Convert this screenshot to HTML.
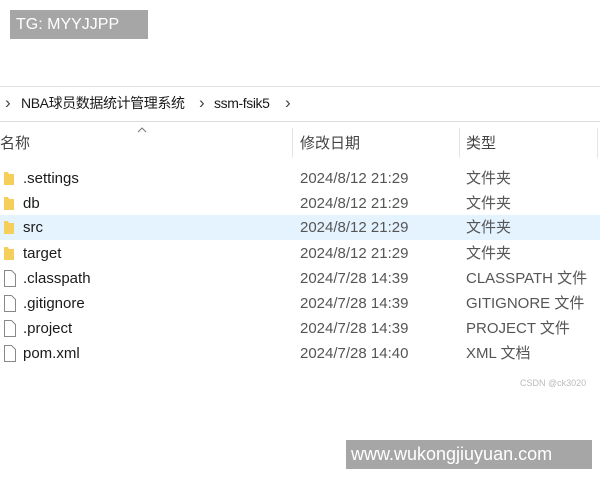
<!DOCTYPE html>
<html><head><meta charset="utf-8"><style>
body{margin:0;width:600px;height:480px;background:#fff;position:relative;overflow:hidden;font-family:"Liberation Sans","Noto Sans CJK SC",sans-serif;color:#1a1a1a}
.a{position:absolute;white-space:nowrap}
.tg{left:10px;top:10px;width:138px;height:29px;background:#a6a6a6;color:#fff;font-size:16px;line-height:29px;padding-left:6px;box-sizing:border-box}
.wm{left:346px;top:440px;width:246px;height:29px;background:#a6a6a6;color:#fff;font-size:18px;line-height:29px;padding-left:5px;box-sizing:border-box}
.hl{left:0;width:600px;height:1px;background:#e3e3e3}
.row{left:0;width:600px;height:25px;font-size:15px;line-height:25px}
.row span{position:absolute}
.n{left:23px}.d{left:300px;color:#555}.t{left:466px;color:#555}
.ic{position:absolute;left:3px;top:5px}
.bc{top:93px;font-size:14px;line-height:20px;letter-spacing:-0.4px}
.ch{color:#444;font-size:17px}
</style></head><body>
<div class="a tg">TG: MYYJJPP</div>
<div class="a hl" style="top:86px"></div>
<div class="a bc ch" style="left:5px">›</div>
<div class="a bc" style="left:21px">NBA球员数据统计管理系统</div>
<div class="a bc ch" style="left:199px">›</div>
<div class="a bc" style="left:214px">ssm-fsik5</div>
<div class="a bc ch" style="left:285px">›</div>
<div class="a hl" style="top:121px;background:#dcdcdc"></div>
<svg class="a" style="left:137px;top:127px" width="10" height="6"><path d="M1 5l4-4 4 4" fill="none" stroke="#777"/></svg>
<div class="a" style="left:0;top:134px;font-size:15px;line-height:20px;color:#444">名称</div>
<div class="a" style="left:292px;top:128px;width:1px;height:30px;background:#e5e5e5"></div>
<div class="a" style="left:300px;top:134px;font-size:15px;line-height:20px;color:#444">修改日期</div>
<div class="a" style="left:459px;top:128px;width:1px;height:30px;background:#e5e5e5"></div>
<div class="a" style="left:466px;top:134px;font-size:15px;line-height:20px;color:#444">类型</div>
<div class="a" style="left:597px;top:128px;width:1px;height:30px;background:#e5e5e5"></div>

<div class="a row" style="top:166px"><svg class="ic" width="14" height="15"><path d="M1 1h4l1 2h5v11H1z" fill="#f6cf5a"/></svg><span class="n">.settings</span><span class="d">2024/8/12 21:29</span><span class="t">文件夹</span></div>
<div class="a row" style="top:191px"><svg class="ic" width="14" height="15"><path d="M1 1h4l1 2h5v11H1z" fill="#f6cf5a"/></svg><span class="n">db</span><span class="d">2024/8/12 21:29</span><span class="t">文件夹</span></div>
<div class="a row" style="top:215px;background:#e5f3ff"><svg class="ic" width="14" height="15"><path d="M1 1h4l1 2h5v11H1z" fill="#f6cf5a"/></svg><span class="n">src</span><span class="d">2024/8/12 21:29</span><span class="t">文件夹</span></div>
<div class="a row" style="top:241px"><svg class="ic" width="14" height="15"><path d="M1 1h4l1 2h5v11H1z" fill="#f6cf5a"/></svg><span class="n">target</span><span class="d">2024/8/12 21:29</span><span class="t">文件夹</span></div>
<div class="a row" style="top:266px"><svg class="ic" width="14" height="17" style="top:4px"><path d="M1.5 .5h7l4 4v12h-11z" fill="#fff" stroke="#888"/></svg><span class="n">.classpath</span><span class="d">2024/7/28 14:39</span><span class="t">CLASSPATH 文件</span></div>
<div class="a row" style="top:291px"><svg class="ic" width="14" height="17" style="top:4px"><path d="M1.5 .5h7l4 4v12h-11z" fill="#fff" stroke="#888"/></svg><span class="n">.gitignore</span><span class="d">2024/7/28 14:39</span><span class="t">GITIGNORE 文件</span></div>
<div class="a row" style="top:316px"><svg class="ic" width="14" height="17" style="top:4px"><path d="M1.5 .5h7l4 4v12h-11z" fill="#fff" stroke="#888"/></svg><span class="n">.project</span><span class="d">2024/7/28 14:39</span><span class="t">PROJECT 文件</span></div>
<div class="a row" style="top:341px"><svg class="ic" width="14" height="17" style="top:4px"><path d="M1.5 .5h7l4 4v12h-11z" fill="#fff" stroke="#888"/></svg><span class="n">pom.xml</span><span class="d">2024/7/28 14:40</span><span class="t">XML 文档</span></div>

<div class="a" style="left:520px;top:378px;font-size:9px;color:#bbb">CSDN @ck3020</div>
<div class="a wm">www.wukongjiuyuan.com</div>
</body></html>
